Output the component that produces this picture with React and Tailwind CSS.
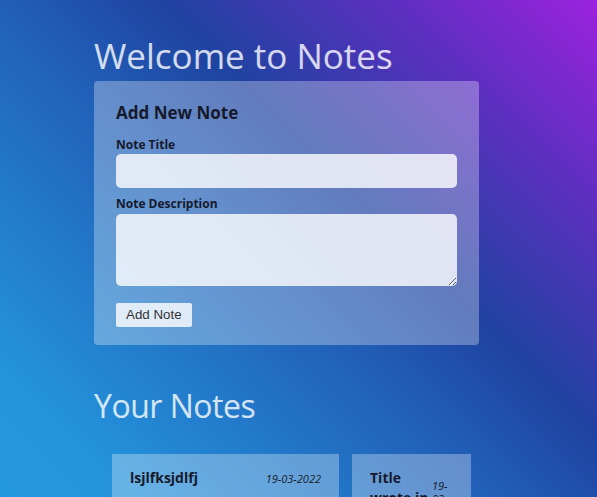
const notes = [
  { id: 1, title: "lsjlfksjdlfj", date: "19-03-2022", body: "sdlfkjsdlfkjsdf lskdjflskdjf", width: "w-[227px]", titleWidth: "" },
  { id: 2, title: "Title wrote in test", date: "19-03-2022", body: "desc", width: "w-[119px]", titleWidth: "w-[60px] shrink-0" },
];

const App = () => {
  return (
    <div className="min-h-screen bg-fixed bg-[linear-gradient(45deg,#2597de_0%,#2493dc_12%,#2160b8_45%,#1f43a1_60%,#5a30be_80%,#9c22df_100%)] font-['Open_Sans',sans-serif] pb-10">
      <div className="ml-[94px] w-[385px] pt-[38px]">
        <h1 className="text-[35px] leading-[36px] text-white/80 mb-[7px]">Welcome to Notes</h1>

        <div className="bg-white/30 rounded-[4px] px-[22px] pt-[21px] pb-[18px] text-[#161a2c]">
          <h3 className="text-[17px] leading-[22px] font-bold">Add New Note</h3>
          <label className="block mt-[13px] mb-[1px] text-[12px] leading-[16px] font-bold">Note Title</label>
          <input type="text" className="block w-full h-[34px] rounded-[5px] bg-white/80 outline-none px-2 text-sm" />
          <label className="block mt-[8px] mb-[2px] text-[12px] leading-[16px] font-bold">Note Description</label>
          <textarea className="block w-full h-[72px] rounded-[5px] bg-white/80 outline-none px-2 text-sm" />
          <button className="mt-[17px] h-[24px] px-[10px] rounded-[2px] bg-white/80 font-['Liberation_Sans',Arial,sans-serif] text-[13.33px] text-[#333]">
            Add Note
          </button>
        </div>

        <h2 className="mt-[43px] text-[32px] leading-[36px] tracking-[-0.5px] text-white/80">Your Notes</h2>

        <div className="mt-[30px] ml-[18px] flex gap-[13px] items-start">
          {notes.map((note) => (
            <div key={note.id} className={`${note.width} bg-white/30 px-[18px] pt-[14px] pb-6 text-[#161a2c]`}>
              <div className="flex items-center justify-between gap-[2px]">
                <h4 className={`${note.titleWidth} text-[14px] leading-[20px] font-bold`}>{note.title}</h4>
                <span className="min-w-0 text-[11px] leading-[13px] italic">{note.date}</span>
              </div>
              <p className="mt-4 text-sm">{note.body}</p>
            </div>
          ))}
        </div>
      </div>
    </div>
  );
};

export default App;
